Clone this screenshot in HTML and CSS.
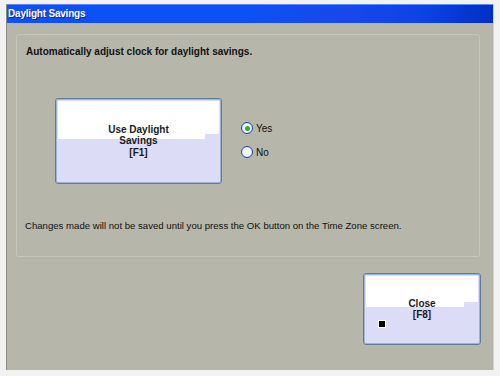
FILE: index.html
```html
<!DOCTYPE html>
<html>
<head>
<meta charset="utf-8">
<link rel="stylesheet" href="styles.css">
</head>
<body>
<div class="window">
  <div class="titlebar">Daylight Savings</div>
  <div class="content">
    <div class="group">
      <div class="heading">Automatically adjust clock for daylight savings.</div>
      <div class="row">
        <div class="btn big">
          <div class="btn-top"></div>
          <div class="btn-label">Use Daylight<br>Savings<br>[F1]</div>
        </div>
        <div class="radios">
          <div class="radio"><span class="dot on"></span>Yes</div>
          <div class="radio"><span class="dot"></span>No</div>
        </div>
      </div>
      <div class="note">Changes made will not be saved until you press the OK button on the Time Zone screen.</div>
    </div>
    <div class="footer">
      <div class="btn close">
        <div class="btn-top"></div>
        <div class="btn-label">Close<br>[F8]</div>
        <span class="stop"></span>
      </div>
    </div>
  </div>
</div>
</body>
</html>
```
FILE: styles.css
```css
html, body {
  margin: 0;
  padding: 0;
  background: #f2f2f2;
  width: 500px;
  height: 376px;
  overflow: hidden;
}
.window {
  margin: 4px 0 0 6px;
  width: 488px;
  height: 366px;
  display: flex;
  flex-direction: column;
  border-left: 1px solid #8a8a84;
  border-right: 1px solid #d4d4cc;
  box-sizing: border-box;
  background: #b6b6aa;
}
.titlebar {
  height: 18px;
  line-height: 18px;
  background: linear-gradient(to right, #0a52f4 0%, #0a52f4 50%, #1848e8 70%, #0c44e6 85%, #0030c0 100%);
  color: #fff;
  font-family: "Liberation Sans", Arial, sans-serif;
  font-weight: bold;
  font-size: 10px;
  letter-spacing: -0.2px;
  padding-left: 1px;
  text-shadow: 1px 1px 0 #0a2a80;
  border-top: 1px solid #5b8cf8;
}
.content {
  flex: 1;
  display: flex;
  flex-direction: column;
  padding: 11px 13px 0 9px;
  font-family: "Liberation Sans", Arial, sans-serif;
  color: #111;
}
.group {
  height: 223px;
  box-sizing: border-box;
  border: 1px solid #c6c6bb;
  border-radius: 3px;
  padding: 11px 0 0 9px;
  position: relative;
}
.heading {
  font-weight: bold;
  font-size: 10px;
  line-height: 12px;
}
.row {
  display: flex;
  align-items: flex-start;
  margin-top: 40px;
}
.btn {
  position: relative;
  box-sizing: border-box;
  border: 1px solid #5a7ea0;
  border-radius: 3px;
  background: #dcdcf6;
  box-shadow: inset 0 0 0 1px #9cb4d0;
  display: flex;
  align-items: center;
  justify-content: center;
  overflow: hidden;
}
.btn-top {
  position: absolute;
  left: 2px;
  right: 2px;
  top: 2px;
  height: calc(50% - 4px);
  background: #ffffff;
}
.btn-top::after {
  content: "";
  position: absolute;
  right: 0;
  bottom: 0;
  width: 14px;
  height: 5px;
  background: #dcdcf6;
}
.btn-label {
  position: relative;
  text-align: center;
  font-size: 10px;
  line-height: 11.5px;
  font-weight: bold;
  color: #1a1a1a;
}
.big {
  width: 167px;
  height: 86px;
  margin-left: 29px;
}
.big .btn-label { margin-top: 0px; }
.radios {
  margin-left: 19px;
  margin-top: 24px;
  display: flex;
  flex-direction: column;
  gap: 12px;
}
.radio {
  display: flex;
  align-items: center;
  font-size: 10px;
  height: 12px;
  gap: 3px;
}
.dot {
  width: 12px;
  height: 12px;
  box-sizing: border-box;
  border-radius: 50%;
  border: 1px solid #1c4a9c;
  background: radial-gradient(circle, #ffffff 0%, #e8ecf8 70%, #b8c4e8 100%);
  position: relative;
}
.dot.on::after {
  content: "";
  position: absolute;
  left: 2.5px;
  top: 2.5px;
  width: 5px;
  height: 5px;
  border-radius: 50%;
  background: #28b030;
}
.note {
  margin-top: 36px;
  margin-left: -1px;
  font-size: 9.6px;
  line-height: 12px;
}
.footer {
  display: flex;
  justify-content: flex-end;
  padding-top: 16px;
}
.close {
  width: 118px;
  height: 72px;
  margin-right: -1px;
}
.close .btn-label { margin-top: 0px; }
.stop {
  position: absolute;
  left: 14px;
  top: 46px;
  width: 6px;
  height: 6px;
  background: #000;
  border: 1px solid #fff;
  box-shadow: 1px 1px 0 #e0e0e0;
}
```
